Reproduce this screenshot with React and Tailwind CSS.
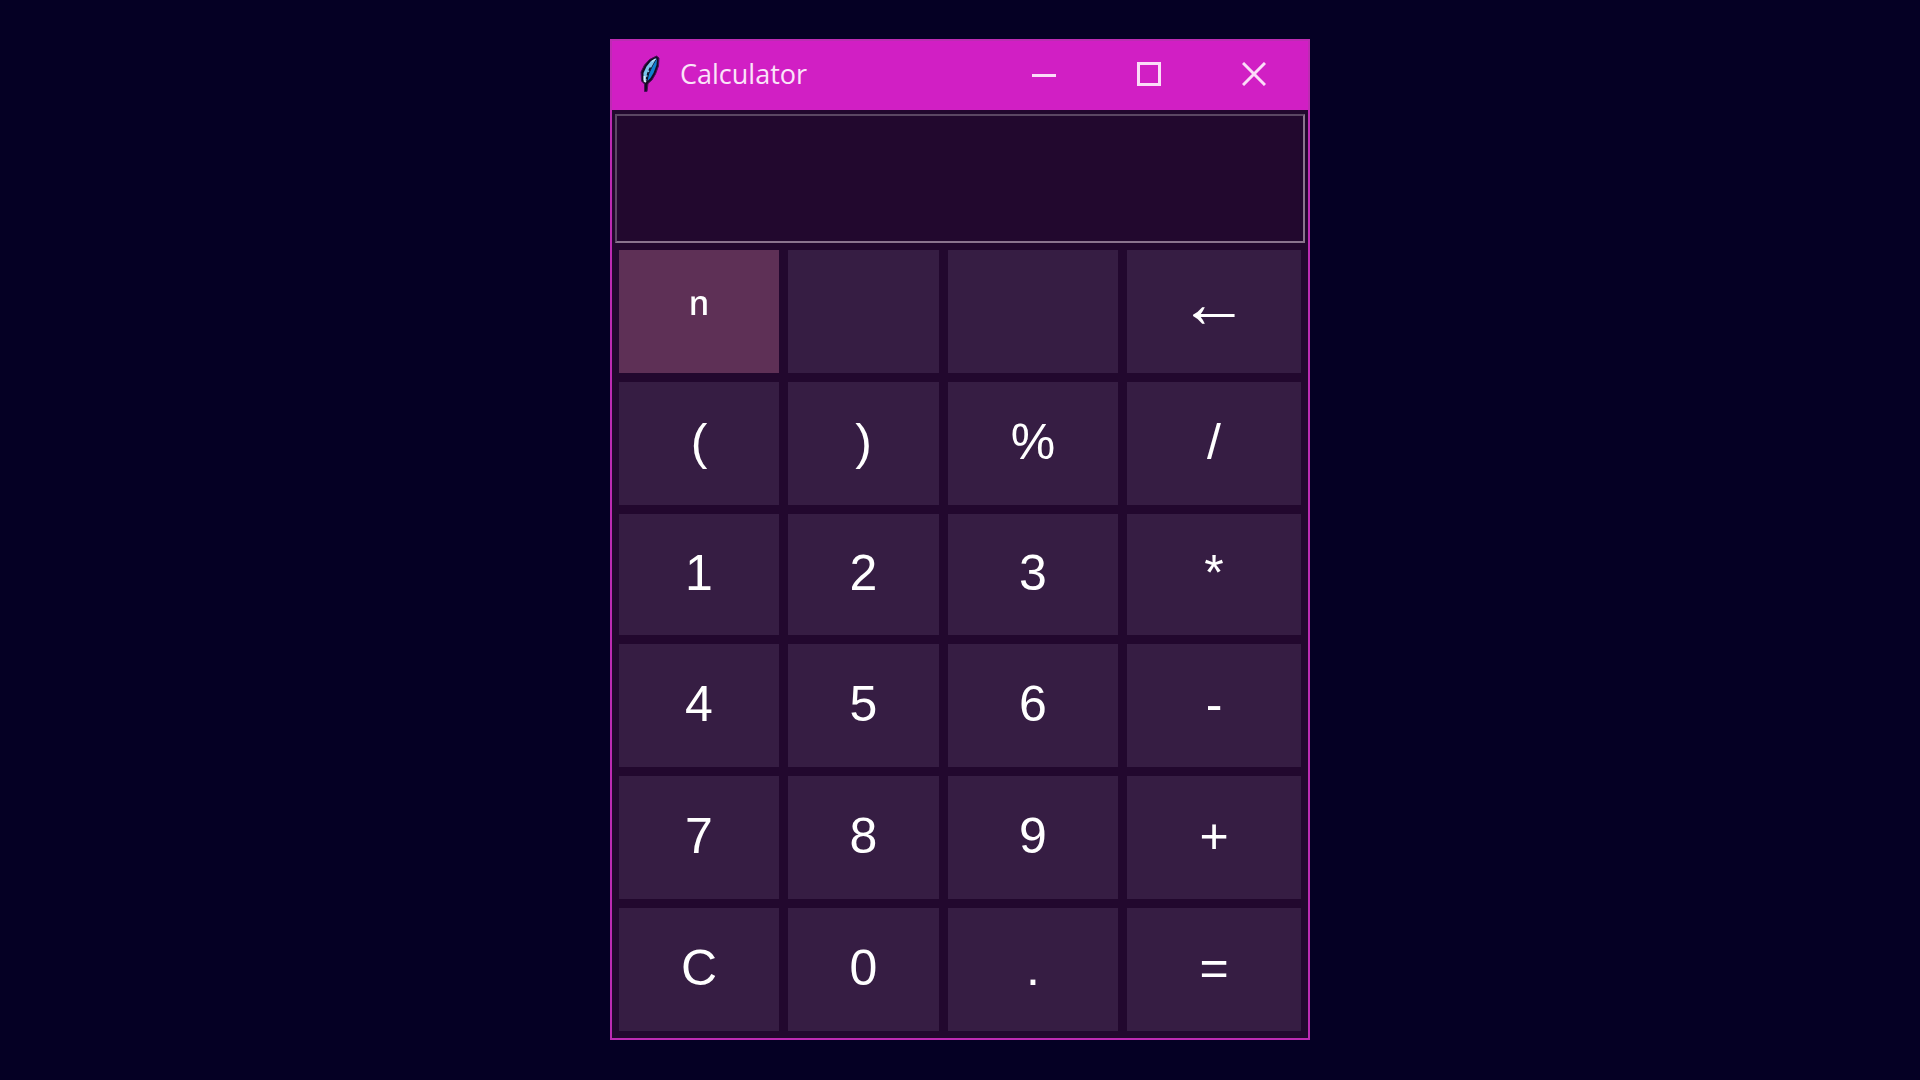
import { useState } from "react";

const KEYS = [
  { label: "ⁿ", name: "power", look: "bg-[#5e3056] pb-0.5 text-[58px]" },
  { label: "", name: "blank one" },
  { label: "", name: "blank two" },
  { label: "←", name: "backspace", look: "bg-[#361d43] pb-4 text-[70px]" },
  { label: "(", name: "open bracket" },
  { label: ")", name: "close bracket" },
  { label: "%", name: "percent" },
  { label: "/", name: "divide" },
  { label: "1", name: "1" },
  { label: "2", name: "2" },
  { label: "3", name: "3" },
  { label: "*", name: "multiply" },
  { label: "4", name: "4" },
  { label: "5", name: "5" },
  { label: "6", name: "6" },
  { label: "-", name: "minus" },
  { label: "7", name: "7" },
  { label: "8", name: "8" },
  { label: "9", name: "9" },
  { label: "+", name: "plus" },
  { label: "C", name: "clear" },
  { label: "0", name: "0" },
  { label: ".", name: "decimal point" },
  { label: "=", name: "equals" },
];

function Feather() {
  return (
    <svg viewBox="0 0 20 38" className="h-[38px] w-5" aria-hidden="true">
      <path
        d="M16.5 1 L19 3 L18.5 11 L15.5 19 L12 25 L8 28.5 L7 36.5 L4.5 36.5 L4.5 29 L1.5 26 L1 17 L4.5 10 L9.5 4.5 Z"
        fill="#160a24"
        stroke="#4b0f5c"
        strokeWidth="1"
        strokeLinejoin="round"
      />
      <path d="M16.5 3 L11 6 L6.5 11.5 L3.5 18 L3.5 25 L6 26.5 L8 19 L12 11 Z" fill="#7cc4ec" />
      <path d="M17 3.5 L16.5 10 L13.5 18 L10.5 23 L7.5 26 L9 19 L13 10.5 Z" fill="#0f7fd0" />
      <path d="M10.5 12.5 L8 18 L6.5 24" fill="none" stroke="#0b1026" strokeWidth="1.6" strokeDasharray="3.5 1.5" />
      <path d="M4.5 21 L4.5 26 L6 27" fill="none" stroke="#d9f1fb" strokeWidth="1.8" />
      <path d="M12 6.5 L15.5 4" fill="none" stroke="#b8e2f6" strokeWidth="1.5" />
    </svg>
  );
}

function WindowButton({ label, children }) {
  return (
    <button type="button" aria-label={label} className="flex w-[105px] items-center justify-center">
      <svg viewBox="0 0 24 24" className="size-6" fill="none" stroke="#fbdcf8" strokeWidth="3" aria-hidden="true">
        {children}
      </svg>
    </button>
  );
}

function TitleBar() {
  return (
    <header className="flex h-[69px] items-stretch bg-[#d11fc4] pr-0.5 pb-0.5 pl-7">
      <div className="flex flex-1 items-center gap-5">
        <Feather />
        <h1 className="font-['Open_Sans','Noto_Sans',sans-serif] text-[27px] leading-8 text-[#fbe4f9]">Calculator</h1>
      </div>
      <WindowButton label="Minimize">
        <path d="M0 13.5H24" />
      </WindowButton>
      <WindowButton label="Maximize">
        <rect x="1.5" y="1.5" width="21" height="21" />
      </WindowButton>
      <WindowButton label="Close">
        <path d="M1 1L23 23M23 1L1 23" />
      </WindowButton>
    </header>
  );
}

export default function App() {
  const [value, setValue] = useState("");

  return (
    <main className="flex min-h-screen items-center justify-center bg-[#050024] pb-0.5 font-['Liberation_Sans',Arial,sans-serif]">
      <section className="w-full max-w-[700px] border-2 border-[#bd2bb3] bg-[#22082e]">
        <TitleBar />
        <div className="px-[3px] pt-1">
          <input
            type="text"
            aria-label="Display"
            value={value}
            onChange={(e) => setValue(e.target.value)}
            className="block h-[129px] w-full border-2 border-t-[#5b4763] border-r-[#8a748e] border-b-[#8a748e] border-l-[#5b4763] bg-[#22082e] px-3 text-right text-[50px] text-white outline-none"
          />
        </div>
        <div className="grid grid-cols-[160fr_151fr_170fr_174fr] grid-rows-[123px_123px_121px_123px_123px_123px] gap-[9px] p-[7px]">
          {KEYS.map((key) => (
            <button
              key={key.name}
              type="button"
              aria-label={key.name}
              className={`flex items-center justify-center leading-none text-white ${
                key.look ?? "bg-[#361d43] pb-0.5 text-[50px]"
              }`}
            >
              {key.label}
            </button>
          ))}
        </div>
      </section>
    </main>
  );
}
